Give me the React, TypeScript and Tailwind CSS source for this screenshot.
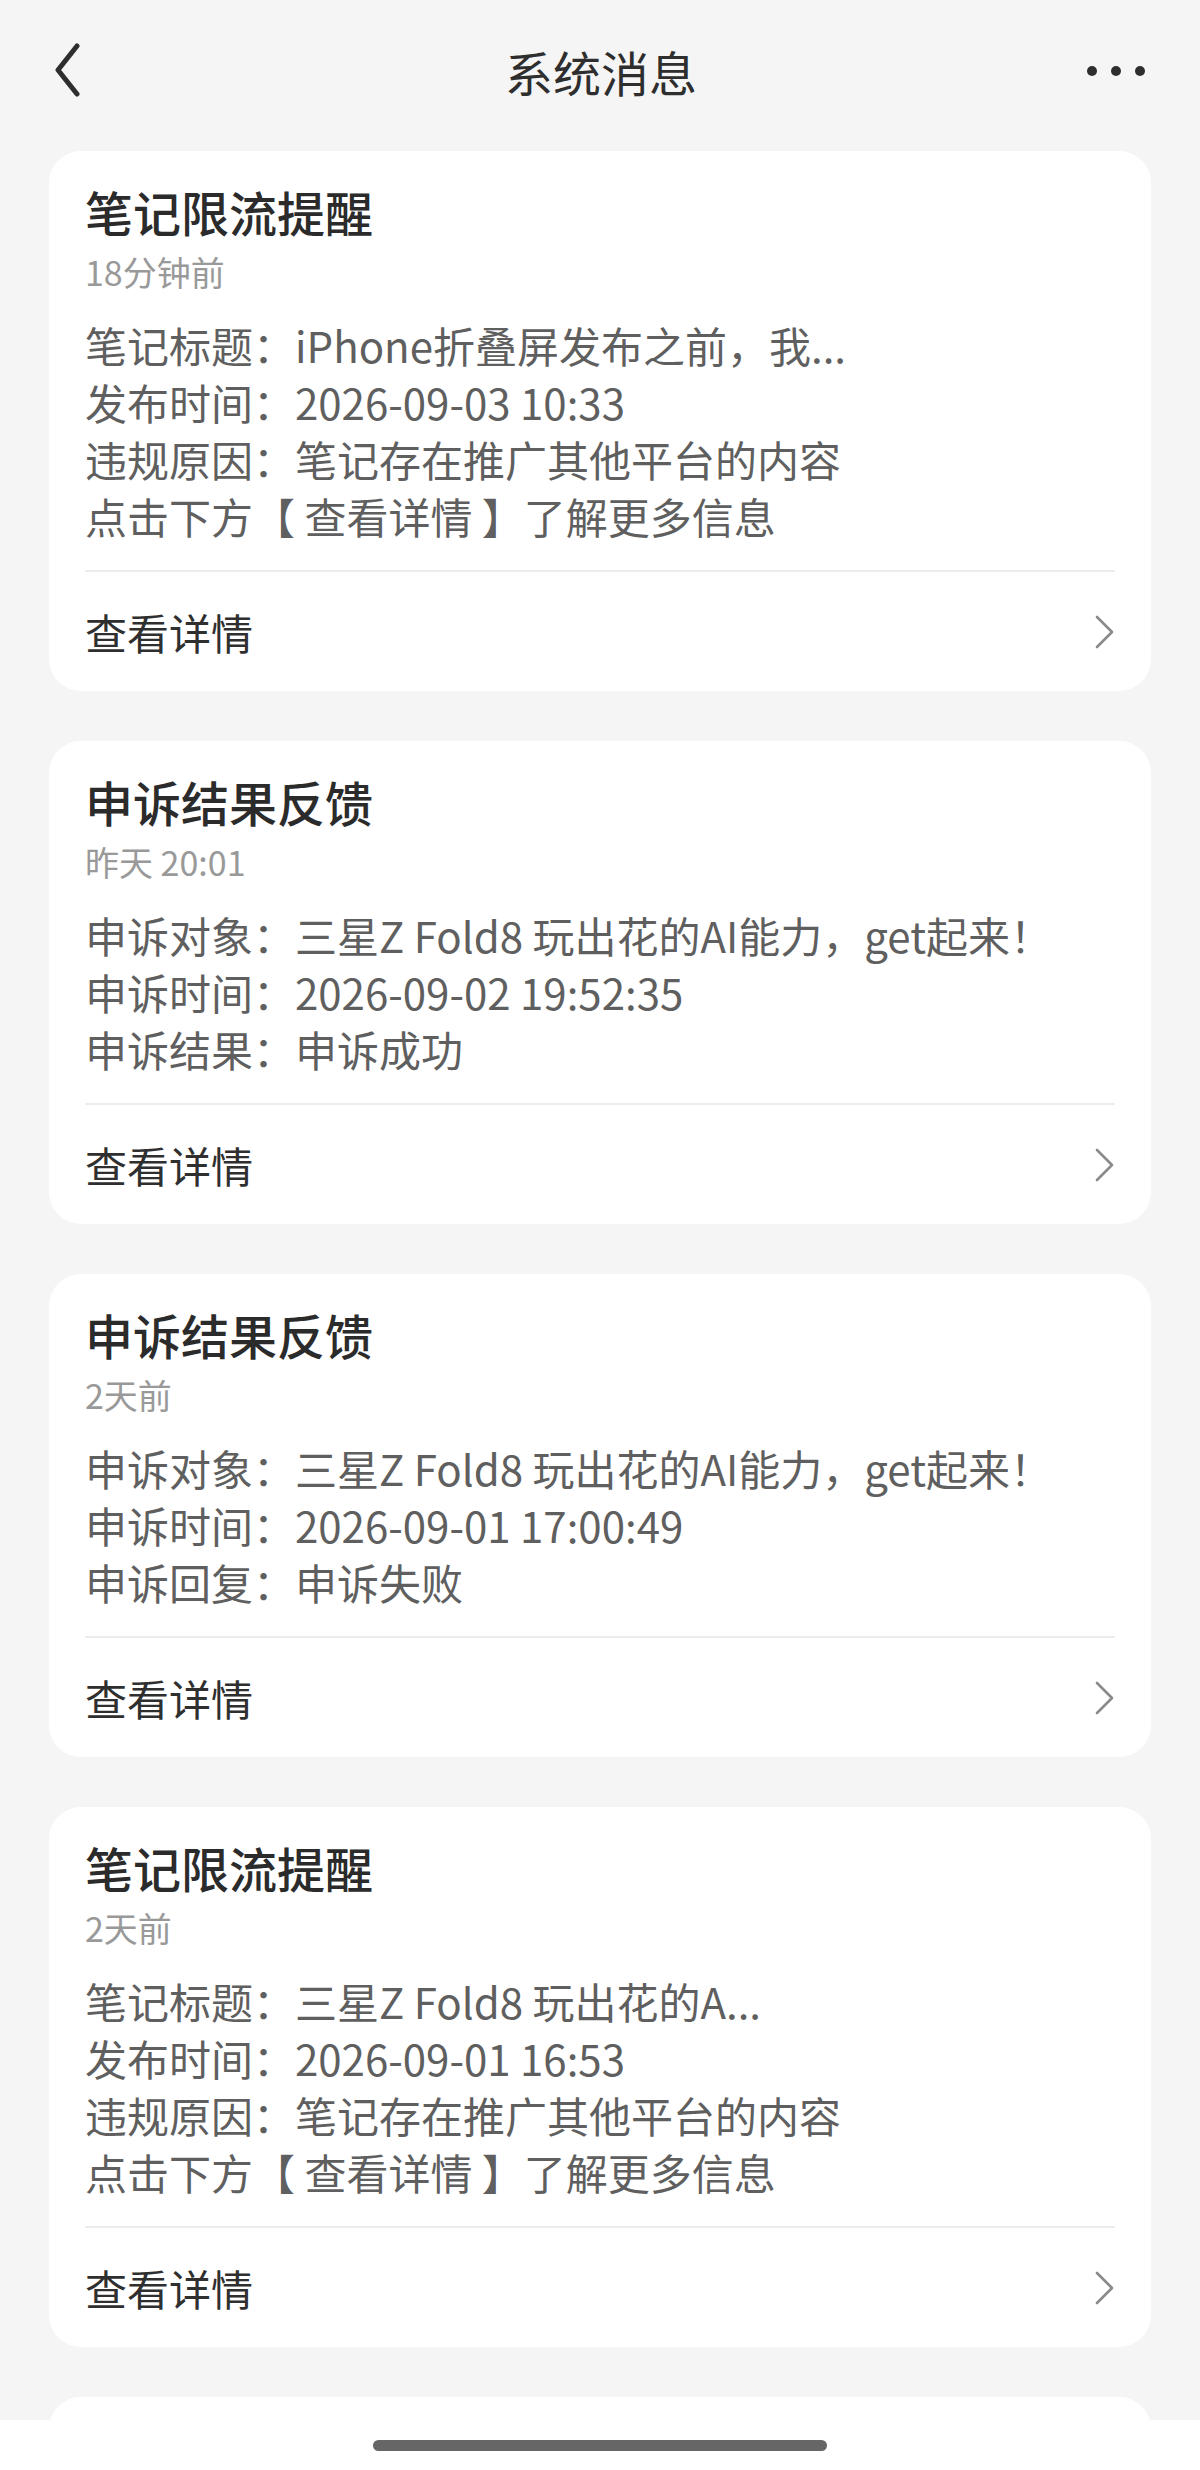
type Msg = {
  title: string;
  time: string;
  lines: string[];
};

const messages: Msg[] = [
  {
    title: "笔记限流提醒",
    time: "18分钟前",
    lines: [
      "笔记标题：iPhone折叠屏发布之前，我...",
      "发布时间：2026-09-03 10:33",
      "违规原因：笔记存在推广其他平台的内容",
      "点击下方【 查看详情 】了解更多信息",
    ],
  },
  {
    title: "申诉结果反馈",
    time: "昨天 20:01",
    lines: [
      "申诉对象：三星Z Fold8 玩出花的AI能力，get起来！",
      "申诉时间：2026-09-02 19:52:35",
      "申诉结果：申诉成功",
    ],
  },
  {
    title: "申诉结果反馈",
    time: "2天前",
    lines: [
      "申诉对象：三星Z Fold8 玩出花的AI能力，get起来！",
      "申诉时间：2026-09-01 17:00:49",
      "申诉回复：申诉失败",
    ],
  },
  {
    title: "笔记限流提醒",
    time: "2天前",
    lines: [
      "笔记标题：三星Z Fold8 玩出花的A...",
      "发布时间：2026-09-01 16:53",
      "违规原因：笔记存在推广其他平台的内容",
      "点击下方【 查看详情 】了解更多信息",
    ],
  },
];

const Card = ({ msg }: { msg: Msg }) => (
  <div className="shrink-0 rounded-[32px] bg-white px-[36px] pt-[30px]">
    <h2 className="text-[48px] leading-[60px] font-medium text-[#2b2b2b]">{msg.title}</h2>
    <p className="mt-[9px] text-[34px] leading-[44px] text-[#999999]">{msg.time}</p>
    <div className="mt-[22px] text-[42px] leading-[57px] text-[#5f5f5f]">
      {msg.lines.map((l, i) => (
        <p key={i} className="whitespace-nowrap">
          {l}
        </p>
      ))}
    </div>
    <div className="mt-[26px] h-[2px] bg-[#ececec]" />
    <div className="flex h-[119px] items-center justify-between">
      <span className="text-[42px] text-[#2f2f2f]">查看详情</span>
      <svg width="24" height="36" viewBox="0 0 24 36" fill="none" className="mr-[-2px]">
        <path d="M4 3 L19 18 L4 33" stroke="#8a8a8a" strokeWidth="2.6" strokeLinecap="round" strokeLinejoin="round" />
      </svg>
    </div>
  </div>
);

export default function App() {
  return (
    <div
      className="flex h-[2470px] w-[1200px] flex-col overflow-hidden bg-[#f5f5f5]"
      style={{ fontFamily: '"Noto Sans CJK SC", "Noto Sans", sans-serif' }}
    >
      {/* header */}
      <div className="grid h-[142px] shrink-0 grid-cols-[1fr_auto_1fr] items-center pl-[40px] pr-[55px]">
        <svg width="40" height="60" viewBox="0 0 40 60" fill="none">
          <path d="M37 5 L18 29 L37 53" stroke="#2e2e2e" strokeWidth="5" strokeLinecap="round" strokeLinejoin="round" />
        </svg>
        <h1 className="ml-[17px] text-[48px] text-[#2e2e2e]">系统消息</h1>
        <div className="flex items-center justify-end gap-[14px]">
          <span className="h-[10px] w-[10px] rounded-full bg-[#2e2e2e]" />
          <span className="h-[10px] w-[10px] rounded-full bg-[#2e2e2e]" />
          <span className="h-[10px] w-[10px] rounded-full bg-[#2e2e2e]" />
        </div>
      </div>

      {/* list */}
      <div className="flex min-h-0 flex-1 flex-col gap-[50px] overflow-hidden px-[49px] pt-[9px]">
        {messages.map((m, i) => (
          <Card key={i} msg={m} />
        ))}
        <div className="h-[300px] shrink-0 rounded-[32px] bg-white" />
      </div>

      {/* home indicator */}
      <div className="flex h-[50px] shrink-0 items-center justify-center bg-white">
        <div className="h-[11px] w-[454px] rounded-full bg-[#666666]" />
      </div>
    </div>
  );
}
